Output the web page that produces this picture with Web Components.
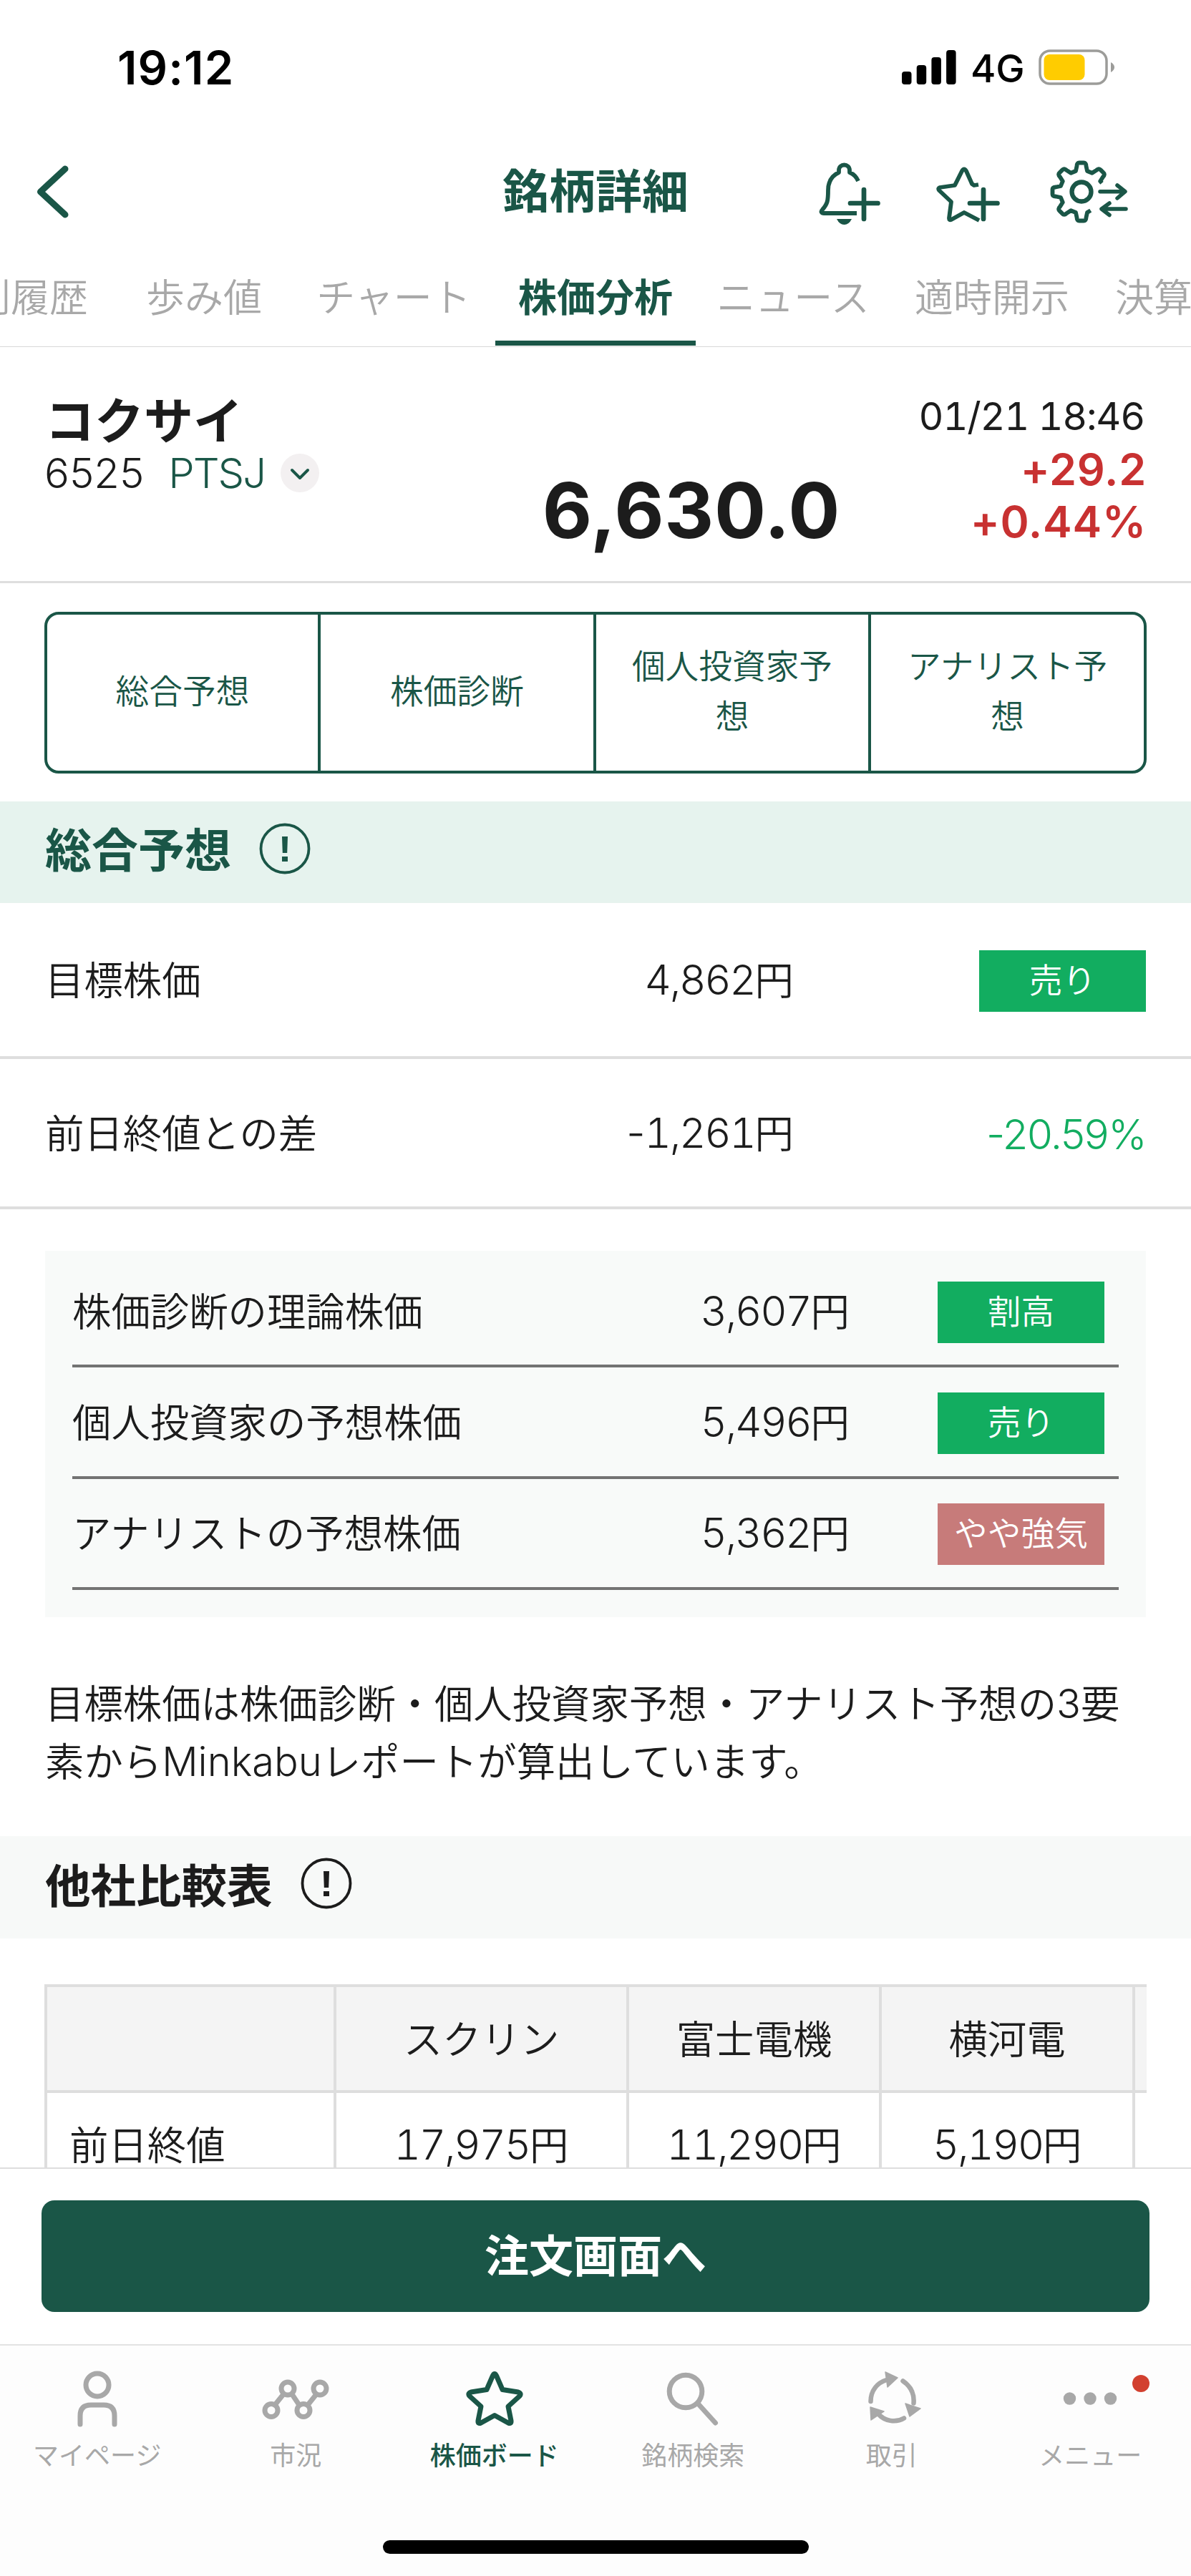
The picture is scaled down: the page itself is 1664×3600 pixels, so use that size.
<!DOCTYPE html>
<html lang="ja">
<head>
<meta charset="utf-8">
<title>銘柄詳細</title>
<style>
  :root {
    --green: #1a5647;
    --ink: #1c1c1c;
    --muted: #a8a8a8;
    --line: #dedede;
    --up: #c83131;
    --down: #12ad60;
    --num: Inter, "Noto Sans CJK JP", sans-serif;
  }
  body {
    margin: 0;
    width: 1664px;
    background: #fff;
    color: var(--ink);
    font-family: "Noto Sans CJK JP", sans-serif;
    font-weight: 350;
  }
</style>
</head>
<body>
<stock-screen>
  <status-bar slot="top" time="19:12" network="4G"></status-bar>
  <title-bar slot="top">銘柄詳細</title-bar>
  <tab-strip slot="top"></tab-strip>
  <quote-header slot="top" name="コクサイ" code="6525" market="PTSJ" price="6,630.0" time="01/21 18:46" change="+29.2" rate="+0.44%"></quote-header>

  <segment-links></segment-links>
  <section-heading>総合予想</section-heading>
  <forecast-row value="4,862" unit="円">目標株価<verdict-badge slot="end">売り</verdict-badge></forecast-row>
  <forecast-row class="second" value="-1,261" unit="円">前日終値との差<rate-text slot="end">-20.59%</rate-text></forecast-row>
  <breakdown-card>
    <forecast-row inset value="3,607" unit="円">株価診断の理論株価<verdict-badge slot="end">割高</verdict-badge></forecast-row>
    <forecast-row inset value="5,496" unit="円">個人投資家の予想株価<verdict-badge slot="end">売り</verdict-badge></forecast-row>
    <forecast-row inset value="5,362" unit="円">アナリストの予想株価<verdict-badge slot="end" tone="bull">やや強気</verdict-badge></forecast-row>
  </breakdown-card>
  <report-note></report-note>
  <section-heading plain>他社比較表</section-heading>
  <compare-table></compare-table>

  <order-bar slot="bottom">注文画面へ</order-bar>
  <bottom-nav slot="bottom"></bottom-nav>
</stock-screen>

<script>
(() => {
  // Outline of the settings gear: six teeth, open on the right for the arrows.
  function gearPath() {
    const at = (deg, r, off) => {
      const a = (deg * Math.PI) / 180;
      const x = 44 + r * Math.sin(a) + off * Math.cos(a);
      const y = 46 - r * Math.cos(a) + off * Math.sin(a);
      return `${x.toFixed(1)} ${y.toFixed(1)}`;
    };
    const teeth = [45, 0, -45, -90, -135, -180];
    let d = `M${at(67, 31, 0)}`;
    teeth.forEach((deg) => {
      d += `L${at(deg, 29, 8)}L${at(deg, 36, 6.5)}Q${at(deg, 41, 6.5)} ${at(deg, 40.5, 2.5)}L${at(deg, 40.5, -2.5)}Q${at(deg, 41, -6.5)} ${at(deg, 36, -6.5)}L${at(deg, 29, -8)}`;
    });
    return d + `L${at(-206, 29, 0)}`;
  }

  const stroke = (w) => `fill="none" stroke="currentColor" stroke-width="${w}" stroke-linecap="round" stroke-linejoin="round"`;

  const ICONS = {
    back: [48, 80, `<path ${stroke(9)} d="M43 8 8.500 40 43 72"/>`],
    bell: [90, 84, `
      <g ${stroke(5.8)}>
        <path d="M59 27C56 20 52 17 47 15V12C47 2 32 2 32 12v3C21 20 17 29 17 40c0 15-1 19-8 27-3 3-1 5 2 5h46" stroke-linecap="butt"/>
        <path stroke-width="6.700" d="M48 58h38.500M67 39v41"/>
      </g>
      <path fill="currentColor" d="M29 80h21q-4 8-10.500 8T29 80z"/>`],
    watch: [90, 84, `
      <g ${stroke(5.8)}>
        <path d="M61 82 40 71 22 81q-3 1-3-2l3-23L5 40q-2-3 1-4l21-3L37 13q3-5 6 0l8 18 3 2 6-1" stroke-linecap="butt"/>
        <path stroke-width="6.700" d="M48 58h38.500M67 39v41"/>
      </g>`],
    gear: [110, 92, `
      <g ${stroke(5.8)}>
        <path stroke-linecap="butt" d="${gearPath()}"/>
        <circle cx="44" cy="46" r="13.500" stroke-width="6.300"/>
        <path stroke-width="5.500" d="M70 45.700h34M94 37l11 8.700L94 55M106 70H72M83 62 72 70l11 8.500"/>
      </g>`],
    alert: [76, 76, `
      <circle cx="38" cy="38" r="33.500" ${stroke(3.8)}/>
      <path fill="currentColor" d="M34 21h8l-.8 23h-6.400zM34 49h8v7h-8z"/>`],
    chevron: [54, 54, `
      <circle cx="27" cy="27" r="27" fill="#f3f0f1"/>
      <path ${stroke(4)} d="M16 23l11 11 11-11"/>`],
    person: [90, 90, `
      <g ${stroke(7)}>
        <ellipse cx="45" cy="25" rx="16" ry="16"/>
        <path d="M21 80V68q0-15 15-15h18q15 0 15 15v12"/>
      </g>`],
    market: [100, 90, `
      <g ${stroke(7)}>
        <circle cx="16" cy="60.500" r="9"/><circle cx="39" cy="30" r="9"/>
        <circle cx="61" cy="60.500" r="9"/><circle cx="84" cy="30" r="9"/>
        <path d="M21 53l12-15M45 38l10 15M67 53l12-15"/>
      </g>`],
    star: [90, 90, `<path ${stroke(7)} d="M42.500 12q2.500-5 5 0l8.500 19.500 22 3.500q5 1.500 2 5.500L64 55l4 20q.5 5-4 3L45 67.500 26 78q-4.500 2-4-3l4-20L10 40.500q-3-4 2-5.500l22-3.500z"/>`],
    search: [90, 90, `
      <g ${stroke(7)}>
        <circle cx="35" cy="34" r="22.800"/>
        <path d="M53 52l23.500 26"/>
      </g>`],
    trade: [90, 90, `
      <g ${stroke(6.5)}>
        <path d="M15.500 48c0-15 9-26 22-30M60.500 19.500c12 8 16 19 15 31M62 71.500c-12 7-27 4-36-6"/>
      </g>
      <path fill="currentColor" stroke="currentColor" stroke-width="1.500" stroke-linejoin="round" d="M36 7l17 8-14 13zM64 51l21 7-15 11zM15 56l19 6-18 12z"/>`],
    more: [90, 90, `
      <g fill="currentColor"><circle cx="16.500" cy="44" r="8.700"/><circle cx="45" cy="44" r="8.700"/><circle cx="73.500" cy="44" r="8.700"/></g>`],
  };

  function define(name, view) {
    customElements.define(name, class extends HTMLElement {
      constructor() {
        super();
        this.attachShadow({ mode: "open" });
      }

      connectedCallback() {
        this.shadowRoot.innerHTML = view(this);
      }
    });
  }

  const attr = (el, key) => el.getAttribute(key) || "";

  define("app-icon", (el) => {
    const [w, h, body] = ICONS[attr(el, "name")];
    return `
      <style>
        :host { display: block; width: ${w}px; height: ${h}px; flex: none; }
        svg { display: block; overflow: visible; }
      </style>
      <svg width="${w}" height="${h}" viewBox="0 0 ${w} ${h}">${body}</svg>
    `;
  });

  // Yen amount: evenly spaced digits with a narrow minus sign.
  define("yen-amount", (el) => `
    <style>
      :host { font-family: var(--num); font-weight: 300; font-size: 58px; line-height: 0; font-variant-numeric: tabular-nums; letter-spacing: -2.300px; }
      i { font-style: normal; font-variant-numeric: normal; letter-spacing: -1px; }
    </style>${attr(el, "value").replace("-", "<i>-</i>")}`);

  define("stock-screen", () => `
    <style>
      :host { display: flex; flex-direction: column; height: 3600px; overflow: hidden; }
      main { flex: 1; min-height: 0; overflow: hidden; }
    </style>
    <slot name="top"></slot>
    <main><slot></slot></main>
    <slot name="bottom"></slot>
  `);

  define("status-bar", (el) => `
    <style>
      :host { display: flex; align-items: center; height: 188px; box-sizing: border-box; padding: 0 106px 0 164px; font-family: var(--num); color: #000; }
      .time { font-size: 65px; font-weight: 600; letter-spacing: 1.100px; margin-right: auto; }
      .net { font-size: 54px; font-weight: 500; line-height: 60px; margin: 4px 21px 0 20px; width: 74px; letter-spacing: -0.3px; }
      svg { display: block; }
    </style>
    <span class="time">${attr(el, "time")}</span>
    <svg width="76" height="48" viewBox="0 0 76 48">
      <rect x="0" y="30" width="13.500" height="18" rx="4"/>
      <rect x="20.700" y="21" width="13.500" height="27" rx="4"/>
      <rect x="41.400" y="10" width="13.500" height="38" rx="4"/>
      <rect x="62.100" y="0" width="13.500" height="48" rx="4"/>
    </svg>
    <span class="net">${attr(el, "network")}</span>
    <svg width="107" height="50" viewBox="0 0 107 50">
      <rect x="2" y="2" width="93" height="46" rx="14" fill="none" stroke="#9c9c99" stroke-width="3.500"/>
      <rect x="7.500" y="7" width="57" height="36" rx="8" fill="#fc0"/>
      <path d="M101 18q5 3 5 7t-5 7z" fill="#9c9c99"/>
    </svg>
  `);

  define("title-bar", () => `
    <style>
      :host { display: grid; grid-template-columns: 1fr auto 1fr; align-items: center; height: 160px; color: var(--green); padding-left: 48px; padding-right: 87px; }
      h1 { margin: -11px 0 0; padding-left: 39px; font-size: 65px; line-height: 80px; font-weight: 700; }
      nav { display: flex; align-items: center; justify-content: flex-end; }
      app-icon[name="bell"] { margin-right: 77px; }
      app-icon[name="watch"] { margin-right: 70px; }
    </style>
    <app-icon name="back"></app-icon>
    <h1><slot></slot></h1>
    <nav>
      <app-icon name="bell"></app-icon>
      <app-icon name="watch"></app-icon>
      <app-icon name="gear"></app-icon>
    </nav>
  `);

  define("tab-strip", () => `
    <style>
      :host { display: flex; height: 136px; border-bottom: 1px solid #d8d8d8; overflow: hidden; color: var(--muted); font-size: 54px; line-height: 64px; }
      span { flex: none; box-sizing: border-box; height: 135px; padding-top: 33px; text-align: center; white-space: nowrap; }
      .first { width: 162px; padding-right: 39px; direction: rtl; text-align: right; }
      .last { padding-left: 30px; }
      .on { color: var(--green); font-weight: 700; border-bottom: 7px solid var(--green); }
    </style>
    <span class="first">別履歴</span>
    <span style="width:246px">歩み値</span>
    <span style="width:284px">チャート</span>
    <span class="on" style="width:280px">株価分析</span>
    <span style="width:272px">ニュース</span>
    <span style="width:284px">適時開示</span>
    <span class="last">決算</span>
  `);

  define("quote-header", (el) => `
    <style>
      :host { display: flex; height: 327px; border-bottom: 3px solid var(--line); padding: 0 62px 0 63px; font-family: var(--num); }
      .id { width: 460px; padding-top: 62px; }
      h2 { margin: 0; font: 700 69px/74px "Noto Sans CJK JP", sans-serif; }
      .code { display: flex; align-items: center; font-size: 58px; font-weight: 300; line-height: 62px; margin: 9px 0 0 -1px; height: 62px; color: var(--ink); }
      .market { color: var(--green); margin: 0 22px 0 34px; letter-spacing: -2px; }
      app-icon { color: var(--green); }
      .price { flex: 1; text-align: right; font-size: 107px; line-height: 120px; font-weight: 700; padding: 168px 28px 0 0; letter-spacing: 0.700px; }
      .move { width: 400px; text-align: right; font-size: 61px; line-height: 73px; font-weight: 600; color: var(--up); padding-top: 59px; letter-spacing: 0.800px; }
      time { display: block; font-size: 54px; line-height: 76px; font-weight: 400; color: var(--ink); font-variant-numeric: tabular-nums; letter-spacing: -1.200px; margin-right: 3px; }
    </style>
    <div class="id">
      <h2>${attr(el, "name")}</h2>
      <div class="code"><span>${attr(el, "code")}</span><span class="market">${attr(el, "market")}</span><app-icon name="chevron"></app-icon></div>
    </div>
    <div class="price">${attr(el, "price")}</div>
    <div class="move">
      <time>${attr(el, "time")}</time>
      <div>${attr(el, "change")}</div>
      <div>${attr(el, "rate")}</div>
    </div>
  `);

  define("segment-links", () => `
    <style>
      :host { display: block; padding: 40px 62px 39px; }
      nav { display: grid; grid-template-columns: 378px repeat(3, 1fr); height: 226px; box-sizing: border-box; border: 4px solid var(--green); border-radius: 20px; color: var(--green); }
      a { display: flex; align-items: center; justify-content: center; text-align: center; font-size: 46.700px; line-height: 70px; padding: 0 44px 10px; }
      a + a { border-left: 4px solid var(--green); }
    </style>
    <nav><a>総合予想</a><a>株価診断</a><a>個人投資家予想</a><a>アナリスト予想</a></nav>
  `);

  define("section-heading", () => `
    <style>
      :host { display: flex; align-items: center; gap: 37px; height: 142px; padding-left: 63px; background: #e6f3ee; color: var(--green); }
      :host([plain]) { height: 143px; background: #f7f9f8; color: var(--ink); }
      h3 { margin: 0; font-size: 65px; line-height: 80px; font-weight: 700; padding-bottom: 14px; }
      :host([plain]) h3 { font-size: 63.500px; }
      app-icon { margin-bottom: 11px; }
    </style>
    <h3><slot></slot></h3>
    <app-icon name="alert"></app-icon>
  `);

  define("forecast-row", (el) => `
    <style>
      :host { display: grid; grid-template-columns: 1fr auto 492px; align-items: center; height: 214px; padding: 0 63px; border-bottom: 4px solid var(--line); font-size: 54.400px; line-height: 80px; }
      :host(.second) { height: 206px; }
      :host([inset]) { grid-template-columns: 1fr auto 356px; height: 151.400px; padding: 0 20px 0 0; border-color: #737373; }
      .label, .value { padding-bottom: 4px; }
      .end { display: flex; justify-content: flex-end; padding-top: 4px; }
    </style>
    <span class="label"><slot></slot></span>
    <span class="value"><yen-amount value="${attr(el, "value")}"></yen-amount>${attr(el, "unit")}</span>
    <span class="end"><slot name="end"></slot></span>
  `);

  define("verdict-badge", () => `
    <style>
      :host { display: block; width: 233px; height: 86px; box-sizing: border-box; background: var(--down); color: #fff; font-size: 46.700px; line-height: 77px; text-align: center; white-space: nowrap; }
      :host([tone="bull"]) { background: #c77b7a; }
    </style>
    <slot></slot>
  `);

  define("rate-text", () => `
    <style>
      :host { display: block; color: var(--down); font-family: var(--num); font-weight: 300; font-size: 58px; line-height: 76px; letter-spacing: -1.500px; }
    </style>
    <slot></slot>
  `);

  define("breakdown-card", () => `
    <style>
      :host { display: block; margin: 58px 63px 0; padding: 8px 38px 38px; background: #f8faf9; }
    </style>
    <slot></slot>
  `);

  define("report-note", () => `
    <style>
      :host { display: block; height: 306px; box-sizing: border-box; padding: 77px 0 0 63px; font-size: 54.400px; line-height: 81px; white-space: nowrap; }
      span { font-family: var(--num); font-weight: 300; font-size: 56px; line-height: 0; }
    </style>
    目標株価は株価診断・個人投資家予想・アナリスト予想の<span>3</span>要<br>素から<span>Minkabu</span>レポートが算出しています。
  `);

  define("compare-table", () => {
    const rows = [["17,975", "11,290", "5,190"]];
    return `
      <style>
        :host { display: block; margin: 64px 62px 0; overflow: hidden; }
        .row { display: grid; grid-template-columns: 404px 409px 353px 354px 60px; border-left: 4px solid var(--line); width: 1600px; }
        .head { background: #f4f4f4; border-top: 4px solid var(--line); border-bottom: 4px solid var(--line); height: 144px; }
        .row > span { box-sizing: border-box; border-right: 4px solid var(--line); text-align: center; font-size: 54.400px; line-height: 140px; height: 100%; }
        .body { height: 144px; }
        .body > span:first-child { text-align: left; padding-left: 31px; }
      </style>
      <div class="row head"><span></span><span>スクリン</span><span>富士電機</span><span>横河電</span><span></span></div>
      ${rows.map((cells) => `
        <div class="row body"><span>前日終値</span>${cells.map((c) => `<span><yen-amount value="${c}"></yen-amount>円</span>`).join("")}<span></span></div>
      `).join("")}
    `;
  });

  define("order-bar", () => `
    <style>
      :host { display: block; height: 247px; box-sizing: border-box; border-top: 2px solid var(--line); padding: 44px 58px 0; background: #fff; }
      button { display: block; width: 100%; height: 156px; border: 0; border-radius: 18px; background: var(--green); color: #fff; font: 700 62px/80px "Noto Sans CJK JP", sans-serif; padding: 0 0 8px; }
    </style>
    <button><slot></slot></button>
  `);

  define("bottom-nav", () => {
    const items = [
      ["person", "マイページ"],
      ["market", "市況"],
      ["star", "株価ボード"],
      ["search", "銘柄検索"],
      ["trade", "取引"],
      ["more", "メニュー"],
    ];
    return `
      <style>
        :host { display: block; height: 324px; box-sizing: border-box; border-top: 2px solid #e3e3e3; background: #fdfdfd; }
        nav { display: grid; grid-template-columns: repeat(6, 277.500px); margin-left: -3px; color: var(--muted); }
        .item { position: relative; display: flex; flex-direction: column; align-items: center; box-sizing: border-box; padding-top: 30px; height: 272px; font-size: 36px; line-height: 50px; font-weight: 400; }
        .item app-icon { margin-bottom: 6px; }
        .on { color: var(--green); font-weight: 500; }
        .dot { position: absolute; left: 197px; top: 41px; width: 24px; height: 24px; border-radius: 50%; background: #d2402f; }
        .home { width: 595px; height: 19px; border-radius: 10px; background: #000; margin: 0 auto; }
      </style>
      <nav>
        ${items.map(([icon, label]) => `
          <div class="item${icon === "star" ? " on" : ""}">
            <app-icon name="${icon}"></app-icon>${label}
            ${icon === "more" ? `<i class="dot"></i>` : ""}
          </div>
        `).join("")}
      </nav>
      <div class="home"></div>
    `;
  });
})();
</script>
</body>
</html>
